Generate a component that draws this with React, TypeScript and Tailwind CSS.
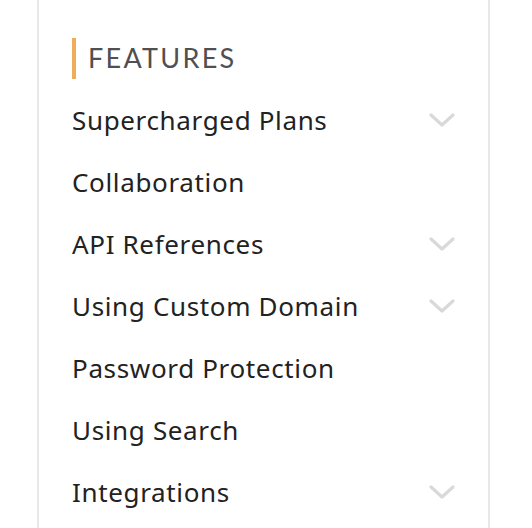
import React from 'react';

const items: { label: string; expandable: boolean }[] = [
  { label: 'Supercharged Plans', expandable: true },
  { label: 'Collaboration', expandable: false },
  { label: 'API References', expandable: true },
  { label: 'Using Custom Domain', expandable: true },
  { label: 'Password Protection', expandable: false },
  { label: 'Using Search', expandable: false },
  { label: 'Integrations', expandable: true },
];

function Chevron() {
  return (
    <svg width="26" height="14" viewBox="0 0 26 14" fill="none" className="shrink-0">
      <path d="M2 2 L13 12 L24 2" stroke="#d9d9d9" strokeWidth="3.2" strokeLinecap="round" strokeLinejoin="round" />
    </svg>
  );
}

export default function App() {
  return (
    <div className="h-[528px] w-[532px] overflow-hidden bg-white" style={{ fontFamily: 'Lato, "Noto Sans", sans-serif' }}>
      <div className="ml-[37px] h-full w-[453px] border-x-2 border-[#e8e8e8] px-[33px] pt-[38px]">
        {/* Section heading */}
        <div className="flex h-[41px] items-center border-l-4 border-[#efac5a] pl-[12px]">
          <span className="text-[27px] tracking-[0.085em] text-[#505050]">FEATURES</span>
        </div>

        <ul className="mt-[10px]">
          {items.map((item) => (
            <li key={item.label} className="flex h-[62px] items-center justify-between">
              <span className="font-['Noto_Sans',sans-serif] text-[26px] tracking-[0.025em] text-[#222222]">{item.label}</span>
              {item.expandable && <Chevron />}
            </li>
          ))}
        </ul>
      </div>
    </div>
  );
}
